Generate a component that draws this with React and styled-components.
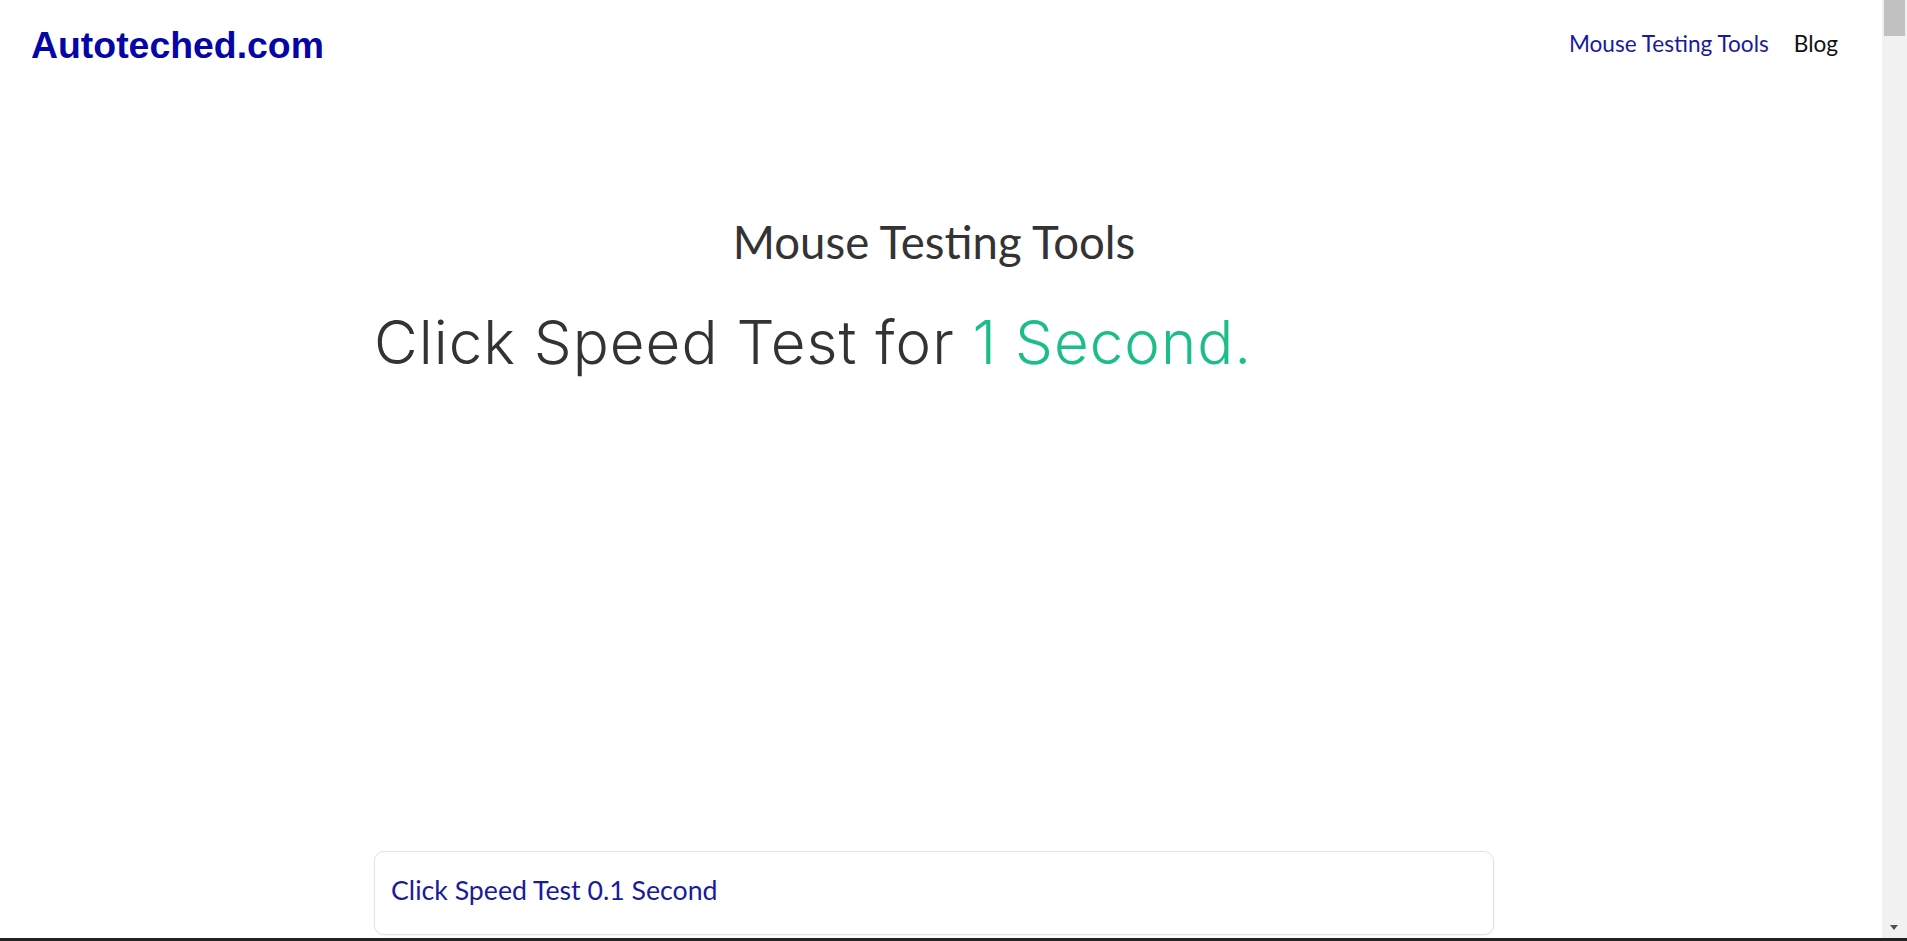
import React from "react";
import styled, { createGlobalStyle } from "styled-components";

const GlobalStyle = createGlobalStyle`
  html, body { margin: 0; padding: 0; background: #ffffff; overflow: hidden; }
  body { font-family: "Lato", "Liberation Sans", sans-serif; color: #333; }
  * { box-sizing: border-box; }
  a { text-decoration: none; }
`;

const Page = styled.div`
  height: 941px;
  padding-right: 25px;
`;

const Header = styled.header`
  display: flex;
  justify-content: space-between;
  align-items: flex-start;
  padding: 0 44px 0 31px;
`;

const Logo = styled.a`
  display: block;
  margin-top: 27px;
  font-family: "Liberation Sans", Arial, sans-serif;
  font-weight: 700;
  font-size: 37.4px;
  line-height: 37px;
  color: #0606a6;
`;

const Nav = styled.nav`
  display: flex;
  gap: 25px;
  margin-top: 33px;
`;

const NavLink = styled.a`
  font-family: "Lato", "Liberation Sans", sans-serif;
  font-size: 22.6px;
  line-height: 22px;
  color: ${(p) => (p.$active ? "#1a1a9c" : "#111111")};
`;

const Container = styled.main`
  width: 1120px;
  margin-left: 374px;
  display: flex;
  flex-direction: column;
`;

const SectionTitle = styled.h2`
  margin: 155px 0 0;
  text-align: center;
  font-family: "Lato", "Open Sans", sans-serif;
  font-weight: 400;
  font-size: 45.5px;
  line-height: 45.5px;
  color: #333333;
`;

const HeroTitle = styled.h1`
  margin: 47px 0 0;
  font-family: "Inter", "Liberation Sans", sans-serif;
  font-weight: 300;
  font-size: 60px;
  line-height: 60px;
  letter-spacing: 1px;
  color: #333333;
  white-space: nowrap;
`;

const Accent = styled.span`
  color: #1dbd8a;
`;

const Card = styled.a`
  display: block;
  margin-top: 479px;
  height: 84px;
  padding: 25px 16px 0;
  border: 1px solid #e2e2e2;
  border-radius: 10px;
  box-shadow: 0 1px 2px rgba(0, 0, 0, 0.05);
  font-family: "Lato", "Liberation Sans", sans-serif;
  font-size: 26.7px;
  line-height: 27px;
  color: #1a1a9c;
`;

const ScrollTrack = styled.div`
  position: fixed;
  top: 0;
  right: 0;
  bottom: 0;
  width: 25px;
  background: #f1f1f1;
`;

const ScrollThumb = styled.div`
  position: absolute;
  top: 0;
  left: 2px;
  right: 2px;
  height: 36px;
  background: #c1c1c1;
`;

const ScrollArrow = styled.div`
  position: absolute;
  bottom: 11px;
  left: 8px;
  width: 0;
  height: 0;
  border-left: 4.5px solid transparent;
  border-right: 4.5px solid transparent;
  border-top: 5px solid #505050;
`;

const BottomEdge = styled.div`
  position: fixed;
  left: 0;
  right: 0;
  bottom: 0;
  height: 3px;
  background: #222222;
`;

export default function App() {
  return (
    <>
      <GlobalStyle />
      <Page>
        <Header>
          <Logo href="#">Autoteched.com</Logo>
          <Nav>
            <NavLink href="#" $active>Mouse Testing Tools</NavLink>
            <NavLink href="#">Blog</NavLink>
          </Nav>
        </Header>
        <Container>
          <SectionTitle>Mouse Testing Tools</SectionTitle>
          <HeroTitle>
            Click Speed Test for <Accent>1 Second.</Accent>
          </HeroTitle>
          <Card href="#">Click Speed Test 0.1 Second</Card>
        </Container>
      </Page>
      <ScrollTrack>
        <ScrollThumb />
        <ScrollArrow />
      </ScrollTrack>
      <BottomEdge />
    </>
  );
}
